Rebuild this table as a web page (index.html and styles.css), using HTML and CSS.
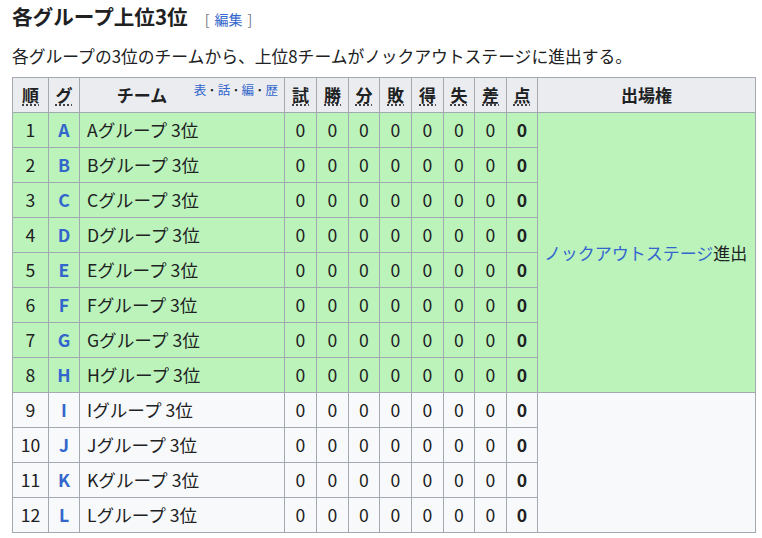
FILE: index.html
```html
<!DOCTYPE html>
<html lang="ja">
<head>
    <meta charset="UTF-8">
    <title>各グループ上位3位</title>
    <link rel="stylesheet" href="styles.css">
</head>
<body>
    <h3 class="section-title">各グループ上位3位<span class="edit-link">[<a href="#">編集</a>]</span></h3>
    <p class="lead">各グループの3位のチームから、上位8チームがノックアウトステージに進出する。</p>

    <table class="standings">
        <colgroup>
            <col style="width: 36px">
            <col style="width: 31px">
            <col style="width: 205px">
            <col style="width: 32px">
            <col style="width: 32px">
            <col style="width: 31px">
            <col style="width: 32px">
            <col style="width: 32px">
            <col style="width: 31px">
            <col style="width: 32px">
            <col style="width: 31px">
            <col style="width: 218px">
        </colgroup>
        <thead>
            <tr>
                <th><abbr title="順位">順</abbr></th>
                <th><abbr title="グループ">グ</abbr></th>
                <th class="team-head">
                    <span class="navbar"><a href="#">表</a><span class="dot">·</span><a href="#">話</a><span class="dot">·</span><a href="#">編</a><span class="dot">·</span><a href="#">歴</a></span>
                    <span class="team-label">チーム</span>
                </th>
                <th><abbr title="試合数">試</abbr></th>
                <th><abbr title="勝利">勝</abbr></th>
                <th><abbr title="引分">分</abbr></th>
                <th><abbr title="敗戦">敗</abbr></th>
                <th><abbr title="得点">得</abbr></th>
                <th><abbr title="失点">失</abbr></th>
                <th><abbr title="得失点差">差</abbr></th>
                <th><abbr title="勝点">点</abbr></th>
                <th>出場権</th>
            </tr>
        </thead>
        <tbody>
            <tr class="qualified">
                <td>1</td><td class="grp"><a href="#">A</a></td><td class="team">Aグループ 3位</td>
                <td>0</td><td>0</td><td>0</td><td>0</td><td>0</td><td>0</td><td>0</td><td class="pts">0</td>
                <td rowspan="8" class="result"><a href="#">ノックアウトステージ</a>進出</td>
            </tr>
            <tr class="qualified">
                <td>2</td><td class="grp"><a href="#">B</a></td><td class="team">Bグループ 3位</td>
                <td>0</td><td>0</td><td>0</td><td>0</td><td>0</td><td>0</td><td>0</td><td class="pts">0</td>
            </tr>
            <tr class="qualified">
                <td>3</td><td class="grp"><a href="#">C</a></td><td class="team">Cグループ 3位</td>
                <td>0</td><td>0</td><td>0</td><td>0</td><td>0</td><td>0</td><td>0</td><td class="pts">0</td>
            </tr>
            <tr class="qualified">
                <td>4</td><td class="grp"><a href="#">D</a></td><td class="team">Dグループ 3位</td>
                <td>0</td><td>0</td><td>0</td><td>0</td><td>0</td><td>0</td><td>0</td><td class="pts">0</td>
            </tr>
            <tr class="qualified">
                <td>5</td><td class="grp"><a href="#">E</a></td><td class="team">Eグループ 3位</td>
                <td>0</td><td>0</td><td>0</td><td>0</td><td>0</td><td>0</td><td>0</td><td class="pts">0</td>
            </tr>
            <tr class="qualified">
                <td>6</td><td class="grp"><a href="#">F</a></td><td class="team">Fグループ 3位</td>
                <td>0</td><td>0</td><td>0</td><td>0</td><td>0</td><td>0</td><td>0</td><td class="pts">0</td>
            </tr>
            <tr class="qualified">
                <td>7</td><td class="grp"><a href="#">G</a></td><td class="team">Gグループ 3位</td>
                <td>0</td><td>0</td><td>0</td><td>0</td><td>0</td><td>0</td><td>0</td><td class="pts">0</td>
            </tr>
            <tr class="qualified">
                <td>8</td><td class="grp"><a href="#">H</a></td><td class="team">Hグループ 3位</td>
                <td>0</td><td>0</td><td>0</td><td>0</td><td>0</td><td>0</td><td>0</td><td class="pts">0</td>
            </tr>
            <tr>
                <td>9</td><td class="grp"><a href="#">I</a></td><td class="team">Iグループ 3位</td>
                <td>0</td><td>0</td><td>0</td><td>0</td><td>0</td><td>0</td><td>0</td><td class="pts">0</td>
                <td rowspan="4" class="result"></td>
            </tr>
            <tr>
                <td>10</td><td class="grp"><a href="#">J</a></td><td class="team">Jグループ 3位</td>
                <td>0</td><td>0</td><td>0</td><td>0</td><td>0</td><td>0</td><td>0</td><td class="pts">0</td>
            </tr>
            <tr>
                <td>11</td><td class="grp"><a href="#">K</a></td><td class="team">Kグループ 3位</td>
                <td>0</td><td>0</td><td>0</td><td>0</td><td>0</td><td>0</td><td>0</td><td class="pts">0</td>
            </tr>
            <tr>
                <td>12</td><td class="grp"><a href="#">L</a></td><td class="team">Lグループ 3位</td>
                <td>0</td><td>0</td><td>0</td><td>0</td><td>0</td><td>0</td><td>0</td><td class="pts">0</td>
            </tr>
        </tbody>
    </table>
</body>
</html>
```

FILE: styles.css
```css
body {
    font-family: "Noto Sans CJK JP", sans-serif;
    color: #202122;
    background: #ffffff;
    margin: 0;
    padding: 0 12px;
}
a {
    color: #3366cc;
    text-decoration: none;
}
.section-title {
    font-size: 20.6px;
    font-weight: bold;
    line-height: 28px;
    margin: 2px 0 0 0;
}
.edit-link {
    font-size: 14px;
    font-weight: normal;
    color: #72777d;
    margin-left: 17px;
}
.edit-link a {
    margin: 0 5px;
}
.lead {
    font-size: 16.8px;
    line-height: 24px;
    margin: 11px 0 9px 0;
}
.standings {
    border-collapse: collapse;
    table-layout: fixed;
    width: 743px;
    font-size: 17.6px;
    background: #f8f9fa;
}
.standings th,
.standings td {
    border: 1px solid #a2a9b1;
    height: 35px;
    padding: 0 4px 1px 4px;
    line-height: 24px;
    text-align: center;
    white-space: nowrap;
    box-sizing: border-box;
}
.standings th {
    background: #eaecf0;
    font-weight: bold;
    font-size: 17px;
}
.standings abbr {
    text-decoration: underline dotted;
    text-underline-offset: 3px;
}
.team-head {
    position: relative;
}
.team-label {
    display: inline-block;
    margin-right: 80px;
}
.navbar {
    position: absolute;
    top: 4px;
    right: 6px;
    font-size: 12.5px;
    font-weight: normal;
    line-height: 16px;
    color: #202122;
}
.navbar .dot {
    margin: 0 2px;
    font-weight: bold;
}
.qualified td {
    background: #bbf3bb;
}
.standings .grp {
    font-weight: bold;
}
.standings .team {
    text-align: left;
    padding-left: 7px;
}
.standings .pts {
    font-weight: bold;
}
.standings .result {
    padding: 0 6px;
    text-align: left;
    font-size: 17px;
}
```
